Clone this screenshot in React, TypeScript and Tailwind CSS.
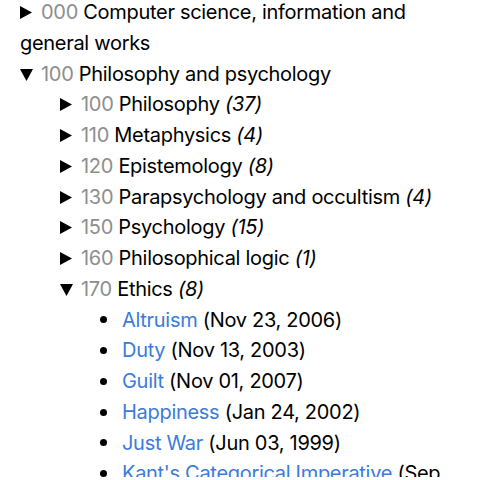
import React from 'react'

type Item = { title: string; date: string }

const RightTri = () => (
  <svg width="12" height="13" viewBox="0 0 12 13" className="inline-block align-baseline mr-[9px]">
    <path d="M0 0 L12 6.5 L0 13 Z" fill="#000" />
  </svg>
)

const DownTri = () => (
  <svg width="13" height="12" viewBox="0 0 13 12" className="inline-block align-baseline mr-[8px]">
    <path d="M0 0 L13 0 L6.5 12 Z" fill="#000" />
  </svg>
)

const Heading = ({
  code,
  name,
  count,
  open,
}: {
  code: string
  name: string
  count?: number
  open?: boolean
}) => (
  <div>
    {open ? <DownTri /> : <RightTri />}
    <span className="text-[#8e8e8e]">{code}</span> {name}
    {count !== undefined && <i> ({count})</i>}
  </div>
)

const ethics: Item[] = [
  { title: 'Altruism', date: 'Nov 23, 2006' },
  { title: 'Duty', date: 'Nov 13, 2003' },
  { title: 'Guilt', date: 'Nov 01, 2007' },
  { title: 'Happiness', date: 'Jan 24, 2002' },
  { title: 'Just War', date: 'Jun 03, 1999' },
  { title: "Kant's Categorical Imperative", date: 'Sep 19, 2004' },
]

const subjects = [
  { code: '100', name: 'Philosophy', count: 37 },
  { code: '110', name: 'Metaphysics', count: 4 },
  { code: '120', name: 'Epistemology', count: 8 },
  { code: '130', name: 'Parapsychology and occultism', count: 4 },
  { code: '150', name: 'Psychology', count: 15 },
  { code: '160', name: 'Philosophical logic', count: 1 },
]

export default function App() {
  return (
    <div
      className="h-[480px] overflow-hidden bg-white text-black text-[20px] leading-[30.75px] tracking-[-0.3px] px-[20px] -mt-[3px]"
      style={{ fontFamily: 'Inter, "Noto Sans", sans-serif' }}
    >
      <Heading code="000" name="Computer science, information and general works" />
      <Heading code="100" name="Philosophy and psychology" open />
      <div className="pl-[40px]">
        {subjects.map((s) => (
          <Heading key={s.code} code={s.code} name={s.name} count={s.count} />
        ))}
        <Heading code="170" name="Ethics" count={8} open />
        <ul className="pl-[40px]">
          {ethics.map((e) => (
            <li key={e.title} className="flex">
              <span className="w-[22px] shrink-0 flex items-center h-[30.75px]">
                <span className="w-[7px] h-[7px] rounded-full bg-black" />
              </span>
              <span>
                <a className="text-[#3b7bdb]">{e.title}</a> ({e.date})
              </span>
            </li>
          ))}
        </ul>
      </div>
    </div>
  )
}
